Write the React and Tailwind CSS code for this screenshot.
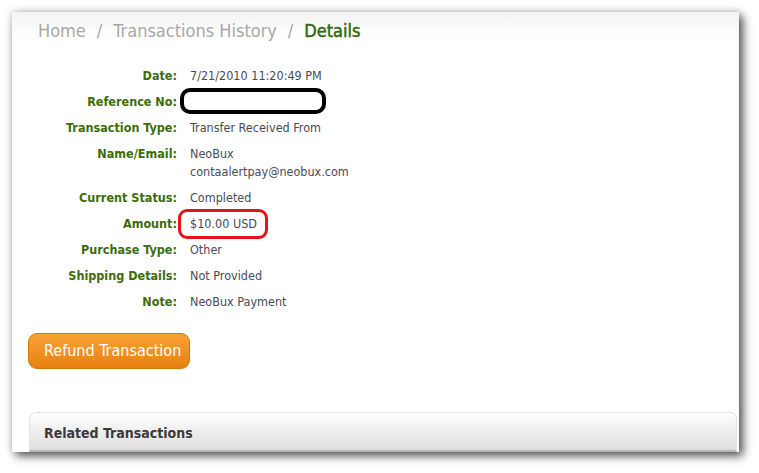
import React from "react";

const rows = [
  { label: "Date:", value: ["7/21/2010 11:20:49 PM"] },
  { label: "Reference No:", value: [""], mark: "black" },
  { label: "Transaction Type:", value: ["Transfer Received From"] },
  { label: "Name/Email:", value: ["NeoBux", "contaalertpay@neobux.com"] },
  { label: "Current Status:", value: ["Completed"] },
  { label: "Amount:", value: ["$10.00 USD"], mark: "red" },
  { label: "Purchase Type:", value: ["Other"] },
  { label: "Shipping Details:", value: ["Not Provided"] },
  { label: "Note:", value: ["NeoBux Payment"] },
];

export default function App() {
  return (
    <div
      className="w-[759px] h-[473px] bg-white pt-[12px] pl-[12px] overflow-hidden"
      style={{ fontFamily: '"DejaVu Sans Condensed", "DejaVu Sans", Tahoma, sans-serif' }}
    >
      <div className="relative w-[727px] h-[440px] bg-white overflow-hidden shadow-[4px_4px_9px_rgba(0,0,0,0.65),0_0_8px_rgba(0,0,0,0.18)]">
        <div className="absolute inset-x-0 top-0 h-[26px] bg-gradient-to-b from-[#f3f3f3] to-white" />
        <div className="relative pl-[26px] pt-[8px] h-[38px] text-[18px] leading-[22px]">
          <span className="text-[#a8a8a8]">Home</span>
          <span className="text-[#a8a8a8] px-[11px]">/</span>
          <span className="text-[#a8a8a8]">Transactions History</span>
          <span className="text-[#a8a8a8] px-[11px]">/</span>
          <span className="text-[#2f6b10] [-webkit-text-stroke:0.5px_#2f6b10]">Details</span>
        </div>
        <div className="relative grid grid-cols-[165px_1fr] gap-x-[13px] pt-[13px] text-[12.5px] leading-[18px]">
          {rows.map((r) => (
            <React.Fragment key={r.label}>
              <div className="text-right font-bold text-[#3d6b0a] py-[4px]">{r.label}</div>
              <div className="text-[#4a4a55] py-[4px] relative">
                {r.value.map((v, i) => (
                  <div key={i} className="h-[18px]">{v}</div>
                ))}
                {r.mark === "black" && (
                  <div className="absolute left-[-10px] top-[-1px] w-[146px] h-[26px] border-[4px] border-black rounded-[10px]" />
                )}
                {r.mark === "red" && (
                  <div className="absolute left-[-12px] top-[-2px] w-[90px] h-[30px] border-[3px] border-[#e8141c] rounded-[9px]" />
                )}
              </div>
            </React.Fragment>
          ))}
        </div>
        <div className="pl-[16px] pt-[18px]">
          <button className="h-[36px] w-[162px] rounded-[9px] border border-[#d4760c] bg-gradient-to-b from-[#f8a234] to-[#e8800f] text-white text-[16px] text-left pl-[15px] pb-[1px]">
            Refund Transaction
          </button>
        </div>
        <div className="ml-[17px] mt-[43px] w-[708px] h-[40px] rounded-t-[7px] border border-[#e2e2e2] border-b-[#b8b8b8] border-b-2 bg-gradient-to-b from-white to-[#dedede] pl-[14px] pt-[10px] text-[14px] font-bold text-[#3a3a3a]">
          Related Transactions
        </div>
      </div>
    </div>
  );
}
